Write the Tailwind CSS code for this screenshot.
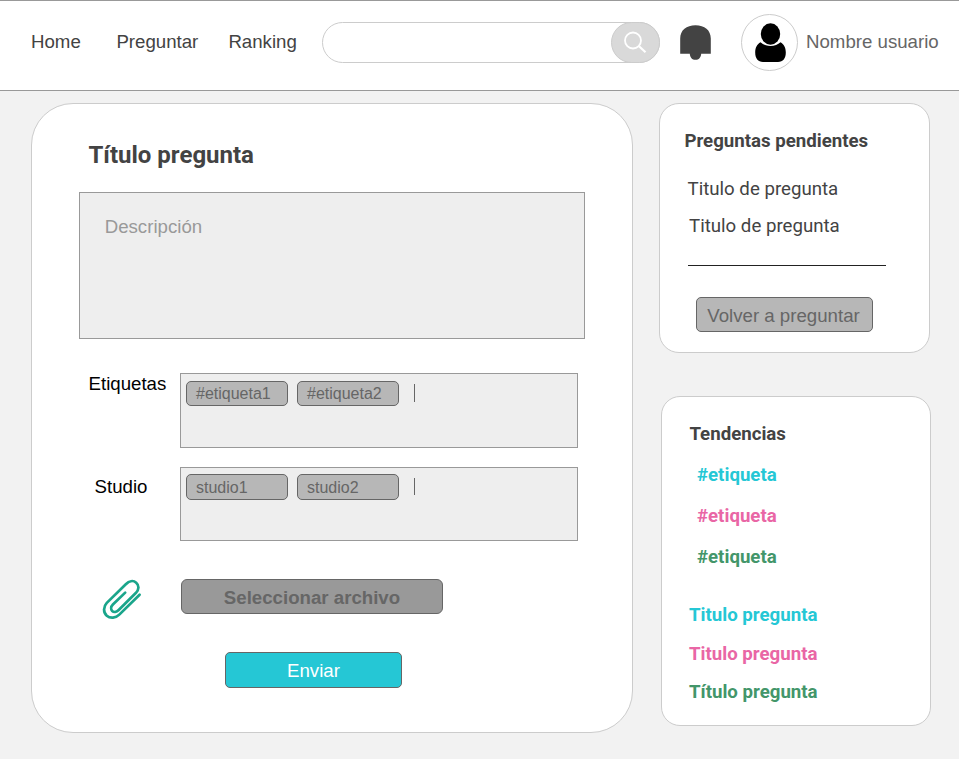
<!DOCTYPE html>
<html lang="es">
<head>
<meta charset="utf-8">
<title>Preguntar</title>
<script src="https://cdn.jsdelivr.net/npm/@tailwindcss/browser@4"></script>
</head>
<body class="bg-white">
<div class="flex h-[759px] w-[959px] flex-col overflow-hidden bg-[#f2f2f2] font-['Liberation_Sans',Arial,sans-serif] text-[18.67px] leading-[22px] text-[#434343]">
  <header class="flex h-[91px] shrink-0 items-center border-y border-[#999] bg-white pb-[6px]">
    <nav class="flex w-[322px] shrink-0 pb-[2px] pl-[31px]">
      <a class="w-[85.400px]">Home</a>
      <a class="w-[112px]">Preguntar</a>
      <a>Ranking</a>
    </nav>
    <div class="flex h-[41px] w-[338px] shrink-0 justify-end rounded-full border border-[#ccc] bg-white">
      <button class="-m-px h-[41px] w-[49px] rounded-[20.5px] border border-[#ccc] bg-[#d9d9d9]">
        <svg class="h-[39px] w-[47px]" viewBox="612 23 47 39" fill="none" stroke="#fff" stroke-width="1.8"><circle cx="633" cy="40.500" r="8"/><path d="M638.8 46 645.5 52.300" stroke-width="2.2"/></svg>
      </button>
    </div>
    <svg class="ml-5 h-[36px] w-[31px] shrink-0" viewBox="680 25 31 36" fill="#434343"><path d="M680.2 53.7V38.5C680.2 30 686.5 25.2 695.5 25.2S710.8 30 710.8 38.5V53.7H701.2C701 57.5 698.800 59.800 695.500 59.800S690 57.500 689.800 53.700Z"/></svg>
    <div class="ml-[30px] h-[57px] w-[57px] shrink-0 rounded-full border border-[#ccc] bg-white">
      <svg class="h-[55px] w-[55px]" viewBox="742 15 55 55"><path d="M760.5 42.300C757.200 44 755.200 47.700 755.200 52.500C755.200 58.500 758 61.900 763 61.900H778C783 61.900 785.800 58.500 785.800 52.500C785.800 47.700 783.800 44 780.500 42.300C778 44.700 774.500 46 770.500 46S763 44.700 760.500 42.300Z"/><ellipse cx="770.5" cy="34" rx="9.700" ry="10.700"/></svg>
    </div>
    <span class="ml-2 whitespace-nowrap pb-[2px] text-[#666]">Nombre usuario</span>
  </header>

  <div class="flex items-start pl-[31px] pt-[12px]">
    <main class="h-[630px] w-[602px] shrink-0 rounded-[42px] border border-[#ccc] bg-white pl-[47px] pt-[37px]">
      <h1 class="pl-[9.500px] font-[Roboto,sans-serif] text-2xl leading-[28px] font-bold">Título pregunta</h1>
      <div class="mt-[23px] h-[147px] w-[506px] border border-[#999] bg-[#eee] pl-[24.700px] pt-[23px] text-[#999]">Descripción</div>
      <div class="mt-[34px] flex">
        <label class="w-[101px] pl-[9.500px] text-black">Etiquetas</label>
        <div class="flex h-[75px] w-[398px] gap-[9px] border border-[#999] bg-[#eee] pl-[5px] pt-[7px] text-base leading-[24px] text-[#666]">
          <span class="h-[25px] w-[102px] rounded-[5px] border border-[#666] bg-[#b7b7b7] pl-[9px]">#etiqueta1</span>
          <span class="h-[25px] w-[102px] rounded-[5px] border border-[#666] bg-[#b7b7b7] pl-[9px]">#etiqueta2</span>
          <span class="ml-[6px] mt-[3px] h-[18px] w-px bg-[#666]"></span>
        </div>
      </div>
      <div class="mt-[19px] flex">
        <label class="w-[101px] pl-[15.500px] pt-[9px] text-black">Studio</label>
        <div class="flex h-[74px] w-[398px] gap-[9px] border border-[#999] bg-[#eee] pl-[5px] pt-[6px] text-base leading-[26px] text-[#666]">
          <span class="h-[26px] w-[102px] rounded-[5px] border border-[#666] bg-[#b7b7b7] pl-[9px]">studio1</span>
          <span class="h-[26px] w-[102px] rounded-[5px] border border-[#666] bg-[#b7b7b7] pl-[9px]">studio2</span>
          <span class="ml-[6px] mt-[4px] h-[17px] w-px bg-[#666]"></span>
        </div>
      </div>
      <div class="mt-[38px] flex">
        <svg class="ml-[23px] h-[41px] w-[40px]" viewBox="102 579 40 41" fill="none" stroke="#1aa58b" stroke-width="2.700" stroke-linecap="round"><path d="M139.600 594.700 119.300 614.600C115.800 618.200 110.200 618.600 106.800 615.700C103.100 612.300 103.200 606.700 106.800 602.900L125.800 584.200C129 581 133.300 580.200 136.200 582.700C139.300 585.400 139.100 589.500 136 592.800L118.700 610C116.500 612.200 113.800 612.500 112.200 611C110.500 609.300 110.900 606.600 112.900 604.500L125.200 592.600"/></svg>
        <button class="ml-[39px] h-[35px] w-[262px] rounded-[6px] border border-[#666] bg-[#999] pt-[2px] font-bold text-[#666]">Seleccionar archivo</button>
      </div>
      <button class="ml-[146px] mt-[32px] block h-[36px] w-[177px] rounded-[5px] border border-[#666] bg-[#25c7d5] pt-[2px] text-white">Enviar</button>
    </main>

    <aside class="ml-[26px] flex flex-col font-[Roboto,sans-serif]">
      <section class="h-[250px] w-[271px] rounded-[20px] border border-[#ccc] bg-white pl-[24px] pt-[26px]">
        <h2 class="pl-[0.400px] font-bold">Preguntas pendientes</h2>
        <p class="mt-[26px] pl-[3.500px]">Titulo de pregunta</p>
        <p class="mt-[15px] pl-[5px]">Titulo de pregunta</p>
        <hr class="ml-[4px] mt-[28px] w-[198px] border-t border-[#222]">
        <button class="ml-[12px] mt-[31px] block h-[35px] w-[177px] rounded-[5px] border border-[#666] bg-[#b7b7b7] pr-[2px] pt-[2px] font-['Liberation_Sans',Arial,sans-serif] text-[#666]">Volver a preguntar</button>
      </section>
      <section class="ml-[2px] mt-[43px] h-[330px] w-[270px] rounded-[19px] border border-[#ccc] bg-white pl-[27px] pt-[26px] font-bold">
        <h2 class="pl-[0.400px]">Tendencias</h2>
        <ul class="mt-[19px] flex flex-col gap-[19px] pl-[8px]">
          <li class="text-[#25c7d5]">#etiqueta</li>
          <li class="text-[#e966a5]">#etiqueta</li>
          <li class="text-[#43966a]">#etiqueta</li>
        </ul>
        <ul class="mt-[36px] flex flex-col gap-[16.700px]">
          <li class="text-[#25c7d5]">Titulo pregunta</li>
          <li class="text-[#e966a5]">Titulo pregunta</li>
          <li class="text-[#43966a]">Título pregunta</li>
        </ul>
      </section>
    </aside>
  </div>
</div>
</body>
</html>
